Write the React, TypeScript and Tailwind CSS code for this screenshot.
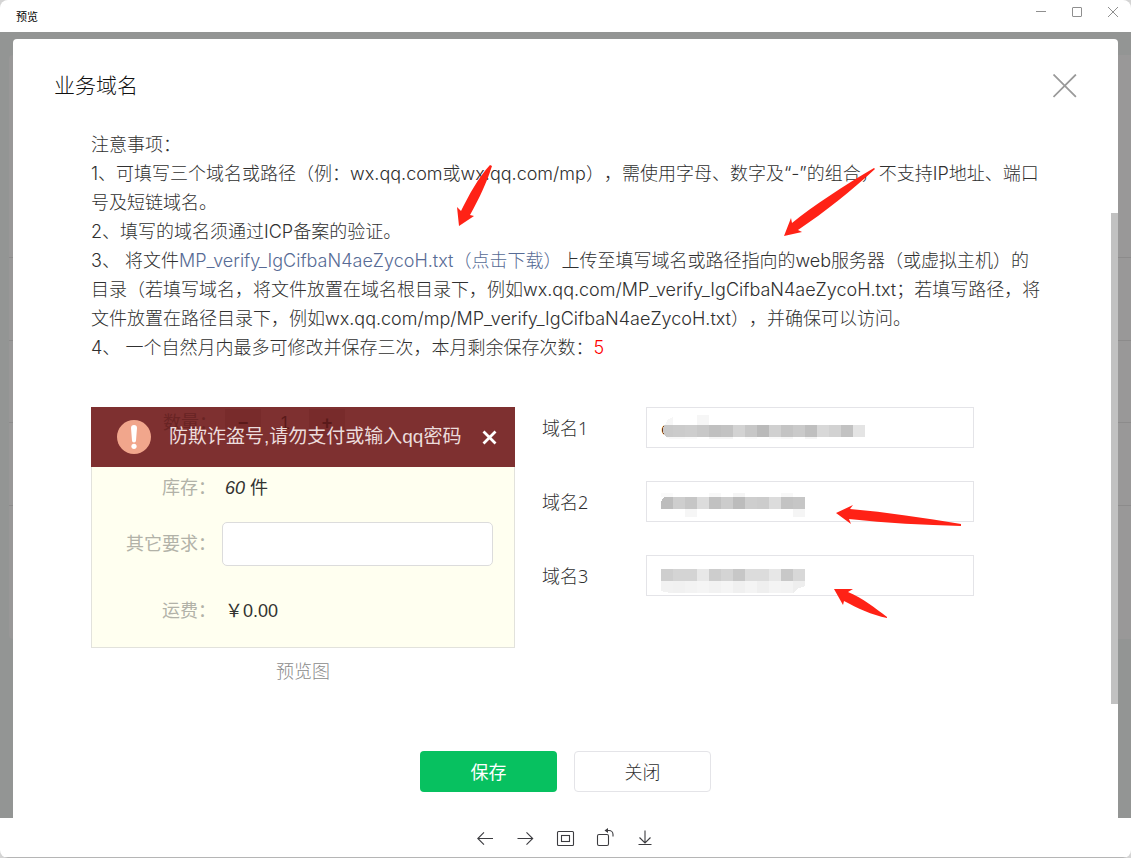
import React, { useState } from 'react';

interface Tile {
  x: number;
  y: number;
  h: number;
  color: string;
}

interface DomainField {
  id: string;
  label: string;
  initial: string;
  tiles: Tile[];
}

const TILE = 12;

const row = (y: number, h: number, colors: string[]): Tile[] =>
  colors.map((color, i) => ({ x: i * TILE, y, h, color })).filter((tile) => tile.color !== '');

const domainFields: DomainField[] = [
  {
    id: 'domain-1',
    label: '域名1',
    initial: 'c',
    tiles: [
      ...row(8, 10, ['', '', '', '#f6f6f6']),
      ...row(30, 2, ['', '#f8f8f8', '#fafafa', '', '#f5f5f5', '#f5f5f5', '', '#fafafa', '', '#fafafa', '#f7f7f7', '', '#f5f5f5']),
      ...row(18, 12, [
        '', '#cbcbcb', '#cdcdcd', '#c8c8c8', '#c0c0c0', '#c3c3c3', '#d3d3d3', '#c7c7c7', '#bababa',
        '#d0d0d0', '#c4c4c4', '#cacaca', '#bfbfbf', '#d8d8d8', '#d2d2d2', '#c2c2c2', '#e4e4e4',
      ]),
    ],
  },
  {
    id: 'domain-2',
    label: '域名2',
    initial: '',
    tiles: [
      ...row(12, 4, ['#fafafa', '', '', '', '#f8f8f8', '', '#f5f5f5', '', '', '', '#f8f8f8']),
      ...row(16, 12, [
        '', '#cecece', '#c6c6c6', '#dcdcdc', '#c1c1c1', '#cccccc', '#bcbcbc', '#cecece', '#cccccc',
        '#dcdcdc', '#c3c3c3', '#c6c6c6',
      ]),
      ...row(28, 8, ['', '', '#f6f6f6', '', '', '', '', '', '', '', '', '#f5f5f5']),
    ],
  },
  {
    id: 'domain-3',
    label: '域名3',
    initial: '',
    tiles: [
      ...row(14, 12, [
        '#cecece', '#d4d4d4', '#d4d4d4', '#e8e8e8', '#cdcdcd', '#d4d4d4', '#c7c7c7', '#dcdcdc',
        '#dcdcdc', '#e7e7e7', '#c8c8c8', '#d8d8d8',
      ]),
      ...row(26, 12, [
        '', '#f1f1f1', '#f3f3f3', '#f5f5f5', '#f2f2f2', '#f5f5f5', '#f0f0f0', '#f4f4f4', '#efefef',
        '#f4f4f4', '#f3f3f3',
      ]),
    ],
  },
];

// Rounded ends of the masking brush, one set per field
const tileCaps: Record<string, { d: string; color: string }[]> = {
  'domain-1': [
    { d: 'M4 18c1-4 4-7 8-8v8z', color: '#f6f6f6' },
    { d: 'M5 30c2 2 4 2 7 2v-2z', color: '#f8f8f8' },
    { d: 'M3 18h9v12H5c-2-2-3-4-3-6s0-4 1-6z', color: '#c9c9c9' },
  ],
  'domain-2': [{ d: 'M3 16h9v12H0v-6c0-2 1-4 3-6z', color: '#bdbdbd' }],
  'domain-3': [
    { d: 'M0 26h12v12c-4 0-8-1-12-2z', color: '#f2f2f2' },
    { d: 'M132 26h12v5l-6 2-6 5z', color: '#eeeeee' },
  ],
};

const arrows = [
  'M446 187l-2-19 4 4c8-16 17-33 29-46l2 1c-5 16-13 33-22 49l4 1z',
  'M771 197l7-18 1 5c22-18 50-36 82-55l1 1c-24 22-50 43-77 61l4 2z',
  'M823 474l17-8-3 4c37 3 74 9 111 15v2c-37-1-74-3-112-7l2 5z',
  'M821 550l19 0-5 3c15 6 27 16 39 25l0 1c-15-3-30-10-43-17l-1 4z',
];

const iconProps = {
  fill: 'none',
  stroke: 'currentColor',
  'aria-hidden': true,
} as const;

const TitleBar: React.FC = () => (
  <header className="flex h-8 shrink-0 items-center justify-between pl-4 font-['Noto_Sans_CJK_SC',sans-serif]">
    <h1 className="text-[11px] text-black">预览</h1>
    <div className="flex self-start text-[#8f8f8f]">
      <button type="button" aria-label="最小化" className="flex h-6 w-9 items-center justify-center">
        <svg width="12" height="12" viewBox="0 0 12 12" {...iconProps}>
          <path d="M1 5.5h10" />
        </svg>
      </button>
      <button type="button" aria-label="最大化" className="flex h-6 w-9 items-center justify-center">
        <svg width="12" height="12" viewBox="0 0 12 12" {...iconProps}>
          <rect x="1.5" y="1.5" width="9" height="9" rx="0.5" />
        </svg>
      </button>
      <button type="button" aria-label="关闭窗口" className="flex h-6 w-9 items-center justify-center">
        <svg width="12" height="12" viewBox="0 0 12 12" {...iconProps}>
          <path d="M1 1l10 10M11 1L1 11" />
        </svg>
      </button>
    </div>
  </header>
);

// Page behind the mask, only its edges stay visible around the dialog
const Backdrop: React.FC = () => (
  <div className="absolute inset-0 pt-[23px] pl-[9px]" aria-hidden="true">
    <div className="flex h-[584px] flex-col divide-y divide-[#8c8b8b] rounded-l bg-[#999898]">
      <div className="h-[203px]" />
      <div className="h-[83px]" />
      <div className="h-[82px]" />
      <div className="h-[83px]" />
      <div />
    </div>
  </div>
);

const Notes: React.FC = () => (
  <div className="font-['Inter','Noto_Sans_CJK_SC',sans-serif] text-lg leading-[29px] font-light text-[#303030] [text-spacing-trim:space-all]">
    <p>注意事项：</p>
    <p>
      1、可填写三个域名或路径（例：wx.qq.com或wx.qq.com/mp），需使用字母、数字及“-”的组合，不支持IP地址、端口
      <br />
      号及短链域名。
    </p>
    <p>2、填写的域名须通过ICP备案的验证。</p>
    <p>
      3、 将文件
      <a href="#download" className="text-[#576b95]">
        MP_verify_IgCifbaN4aeZycoH.txt（点击下载）
      </a>
      上传至填写域名或路径指向的web服务器（或虚拟主机）的
      <br />
      目录（若填写域名，将文件放置在域名根目录下，例如wx.qq.com/MP_verify_IgCifbaN4aeZycoH.txt；若填写路径，将
      <br />
      文件放置在路径目录下，例如wx.qq.com/mp/MP_verify_IgCifbaN4aeZycoH.txt），并确保可以访问。
    </p>
    <p>
      4、 一个自然月内最多可修改并保存三次，本月剩余保存次数：
      <span className="text-[#ff0000]">5</span>
    </p>
  </div>
);

const Preview: React.FC = () => (
  <figure className="w-[424px] shrink-0">
    <div className="h-[241px] border border-t-0 border-[#e2e2dc] bg-[#fffff0] font-['Liberation_Sans','Noto_Sans_CJK_SC',sans-serif] text-lg">
      <div className="relative -mx-px flex h-[60px] items-center bg-[#7e3030] pr-[18px] pl-[26px]">
        <div className="absolute top-[2px] left-[72px] flex items-center font-bold text-[#5a1a1a]" aria-hidden="true">
          <span className="w-[62px] font-normal text-[#692424]">数量：</span>
          <span className="w-9 bg-[#782b2b] text-center">−</span>
          <span className="w-12 text-center font-normal">1</span>
          <span className="w-9 bg-[#782b2b] text-center">+</span>
        </div>
        <svg className="relative shrink-0" width="34" height="34" viewBox="0 0 34 34" aria-hidden="true">
          <circle cx="17" cy="17" r="17" fill="#f1a68c" />
          <path d="M14 8a3 3 0 0 1 6 0L19 20.5a2 2 0 0 1-4 0z" fill="#fff" />
          <circle cx="17" cy="26.3" r="2.6" fill="#fff" />
        </svg>
        <span className="relative ml-[18px] flex-1 text-[19px] whitespace-nowrap text-[#ecdcdc]">
          防欺诈盗号,请勿支付或输入qq密码
        </span>
        <svg className="relative" width="15" height="15" viewBox="0 0 15 15" {...iconProps}>
          <path d="M1.5 1.5l12 12M13.5 1.5l-12 12" stroke="#fff" strokeWidth="2.8" />
        </svg>
      </div>
      <div className="grid grid-cols-[124px_1fr] items-center gap-x-[6px] pr-[21px] text-[#333330]">
        <span className="flex h-[42px] items-center justify-end text-[#b2b2a8]">库存：</span>
        <span className="pl-[3px]">
          <em>60</em> 件
        </span>
        <label htmlFor="other" className="flex h-[70px] items-center justify-end text-[#b2b2a8]">
          其它要求：
        </label>
        <input id="other" className="h-11 w-full rounded-[5px] border border-[#dcdcdc] bg-white px-3 outline-none" />
        <span className="flex h-[63px] items-center justify-end text-[#b2b2a8]">运费：</span>
        <span className="pl-[3px]">￥0.00</span>
      </div>
    </div>
    <figcaption className="pt-[9px] text-center text-lg font-light text-[#8a8a8a]">预览图</figcaption>
  </figure>
);

const DomainInput: React.FC<{ field: DomainField }> = ({ field }) => {
  const [value, setValue] = useState(field.initial);

  return (
    <div className="flex items-center">
      <label htmlFor={field.id} className="w-[104px] text-lg font-light text-[#303030]">
        {field.label}
      </label>
      <div className="relative max-w-[328px] flex-1">
        <input
          id={field.id}
          value={value}
          onChange={(e) => setValue(e.target.value)}
          className="block h-[41px] w-full border border-[#e4e4e8] bg-white px-[14px] text-lg text-[#222222] outline-none"
        />
        <svg
          className="pointer-events-none absolute top-0 left-[15px]"
          width="204"
          height="40"
          shapeRendering="crispEdges"
          aria-hidden="true"
        >
          {field.tiles.map((tile) => (
            <rect key={`${tile.x}-${tile.y}`} x={tile.x} y={tile.y} width={TILE} height={tile.h} fill={tile.color} />
          ))}
          {tileCaps[field.id].map((cap) => (
            <path key={cap.d} d={cap.d} fill={cap.color} />
          ))}
        </svg>
      </div>
    </div>
  );
};

const Dialog: React.FC = () => (
  <section
    role="dialog"
    aria-labelledby="dialog-title"
    className="relative flex flex-1 flex-col rounded-t-[4px] bg-white"
  >
    <div className="flex h-[91px] items-center justify-between px-[41px] pt-[2px]">
      <h2 id="dialog-title" className="text-[21px] font-light text-[#111111]">
        业务域名
      </h2>
      <button type="button" aria-label="关闭对话框" className="text-[#9a9a9a]">
        <svg width="24" height="24" viewBox="0 0 24 24" strokeWidth="1.8" {...iconProps}>
          <path d="M0.5 0.5l22.4 22.4M22.9 0.5L0.5 22.9" />
        </svg>
      </button>
    </div>

    <div className="pr-[50px] pl-[78px]">
      <Notes />
      <div className="mt-[45px] flex gap-[27px]">
        <Preview />
        <div className="flex flex-1 flex-col gap-[33px]">
          {domainFields.map((field) => (
            <DomainInput key={field.id} field={field} />
          ))}
        </div>
      </div>
    </div>

    <div className="mt-auto flex justify-center gap-[17px] pb-[26px] text-lg">
      <button type="button" className="h-[41px] w-[137px] rounded bg-[#07c160] text-white">
        保存
      </button>
      <button
        type="button"
        className="h-[41px] w-[137px] rounded border border-[#e4e4e8] bg-white font-light text-[#303030]"
      >
        关闭
      </button>
    </div>

    <div className="absolute top-[174px] right-0 h-[491px] w-[7px] bg-[#c1c1c1]" aria-hidden="true" />

    <svg className="pointer-events-none absolute inset-0 size-full" fill="#ff2216" aria-hidden="true">
      {arrows.map((d) => (
        <path key={d} d={d} />
      ))}
    </svg>
  </section>
);

const toolbarItems = [
  { label: '上一张', icon: <path d="M17 10.5H2M8 4.3L1.8 10.5 8 16.7" /> },
  { label: '下一张', icon: <path d="M1.5 10.5h15M10.5 4.3l6.2 6.2-6.2 6.2" /> },
  {
    label: '原始大小',
    icon: (
      <>
        <rect x="1.5" y="3.5" width="16" height="14" rx="1" />
        <rect x="5.5" y="7.5" width="8" height="6" />
      </>
    ),
  },
  {
    label: '旋转',
    icon: (
      <>
        <rect x="1.5" y="6.5" width="11" height="11" rx="1.5" />
        <path d="M10.5 2.5h2.5a4 4 0 0 1 4 4v2" />
        <path d="M12 0L8.5 2.5 12 5z" fill="currentColor" stroke="none" />
      </>
    ),
  },
  { label: '下载', icon: <path d="M9 2.5v12M3.5 9.5L9 15l5.5-5.5M2.5 16.5h13" /> },
];

const Toolbar: React.FC = () => (
  <footer className="flex h-10 shrink-0 justify-center border-b border-[#b5b5b5] text-[#3c3c40]">
    {toolbarItems.map((item) => (
      <button key={item.label} type="button" aria-label={item.label} className="flex w-10 items-center justify-center">
        <svg width="20" height="20" viewBox="0 0 20 20" strokeWidth="1.1" {...iconProps}>
          {item.icon}
        </svg>
      </button>
    ))}
  </footer>
);

const App: React.FC = () => (
  <div className="bg-[#d4d4d4] font-['Noto_Sans','Noto_Sans_CJK_SC',sans-serif]">
    <div className="flex min-h-screen flex-col overflow-hidden rounded-lg bg-white">
      <TitleBar />
      <main className="relative flex flex-1 flex-col bg-[#939594] px-[13px] pt-[7px]">
        <Backdrop />
        <Dialog />
      </main>
      <Toolbar />
    </div>
  </div>
);

export default App;
